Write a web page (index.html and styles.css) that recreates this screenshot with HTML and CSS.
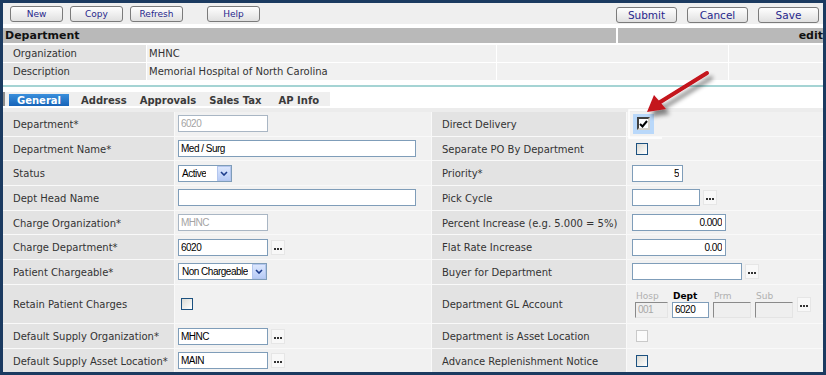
FILE: index.html
```html
<!DOCTYPE html>
<html>
<head>
  <title>Department</title>
  <meta charset="utf-8">
  <link rel="stylesheet" href="styles.css">
</head>
<body>
  <div class="window">
    <div class="toolbar">
      <div class="tools">
        <button class="btn">New</button>
        <button class="btn">Copy</button>
        <button class="btn">Refresh</button>
        <button class="btn help">Help</button>
      </div>
      <div class="actions">
        <button class="btn">Submit</button>
        <button class="btn">Cancel</button>
        <button class="btn">Save</button>
      </div>
    </div>

    <div class="title-bar">
      <div class="title">Department</div>
      <div class="mode">edit</div>
    </div>

    <div class="info">
      <div class="label">Organization</div><div class="value">MHNC</div><div></div><div></div>
      <div class="label">Description</div><div class="value">Memorial Hospital of North Carolina</div><div></div><div></div>
    </div>

    <div class="tab-bar">
      <div class="tabs">
        <span class="tab active">General</span>
        <span class="tab t-address">Address</span>
        <span class="tab t-approvals">Approvals</span>
        <span class="tab t-tax">Sales Tax</span>
        <span class="tab t-ap">AP Info</span>
      </div>
    </div>

    <div class="form">
      <div class="grid">
        <div class="lbl">Department*</div>
        <div class="val"><input class="field off w90" value="6020" disabled></div>
        <div class="lbl">Direct Delivery</div>
        <div class="val r"><span class="hilite"><span class="tick"><svg width="9" height="8" viewBox="0 0 9 8"><path d="M1 4 L3.5 6.5 L8 1" fill="none" stroke="#000" stroke-width="2"/></svg></span></span></div>

        <div class="lbl">Department Name*</div>
        <div class="val"><input class="field w238" value="Med / Surg"></div>
        <div class="lbl">Separate PO By Department</div>
        <div class="val r"><span class="box"></span></div>

        <div class="lbl">Status</div>
        <div class="val"><span class="select w54"><span class="sel-text">Active</span><span class="sel-btn"><svg width="8" height="5" viewBox="0 0 8 5"><path d="M1 1 L4 4 L7 1" fill="none" stroke="#1d3d8c" stroke-width="1.6"/></svg></span></span></div>
        <div class="lbl">Priority*</div>
        <div class="val r"><input class="field num w51" value="5"></div>

        <div class="lbl">Dept Head Name</div>
        <div class="val"><input class="field w238" value=""></div>
        <div class="lbl">Pick Cycle</div>
        <div class="val r"><input class="field w68" value=""><span class="dots"><svg width="8" height="2" viewBox="0 0 8 2"><rect x="0" width="2" height="2"/><rect x="3" width="2" height="2"/><rect x="6" width="2" height="2"/></svg></span></div>

        <div class="lbl">Charge Organization*</div>
        <div class="val"><input class="field off w90" value="MHNC" disabled></div>
        <div class="lbl">Percent Increase (e.g. 5.000 = 5%)</div>
        <div class="val r"><input class="field num w94" value="0.000"></div>

        <div class="lbl">Charge Department*</div>
        <div class="val"><input class="field w90" value="6020"><span class="dots"><svg width="8" height="2" viewBox="0 0 8 2"><rect x="0" width="2" height="2"/><rect x="3" width="2" height="2"/><rect x="6" width="2" height="2"/></svg></span></div>
        <div class="lbl">Flat Rate Increase</div>
        <div class="val r"><input class="field num w94" value="0.00"></div>

        <div class="lbl">Patient Chargeable*</div>
        <div class="val"><span class="select w89"><span class="sel-text">Non Chargeable</span><span class="sel-btn"><svg width="8" height="5" viewBox="0 0 8 5"><path d="M1 1 L4 4 L7 1" fill="none" stroke="#1d3d8c" stroke-width="1.6"/></svg></span></span></div>
        <div class="lbl">Buyer for Department</div>
        <div class="val r"><input class="field w110" value=""><span class="dots"><svg width="8" height="2" viewBox="0 0 8 2"><rect x="0" width="2" height="2"/><rect x="3" width="2" height="2"/><rect x="6" width="2" height="2"/></svg></span></div>

        <div class="lbl">Retain Patient Charges</div>
        <div class="val"><span class="box left"></span></div>
        <div class="lbl">Department GL Account</div>
        <div class="val r">
          <div class="gl">
            <span class="sub">Hosp</span>
            <span class="sub on">Dept</span>
            <span class="sub">Prm</span>
            <span class="sub">Sub</span>
            <span class="dots gl-dots"><svg width="8" height="2" viewBox="0 0 8 2"><rect x="0" width="2" height="2"/><rect x="3" width="2" height="2"/><rect x="6" width="2" height="2"/></svg></span>
            <input class="gl-in" value="001" disabled>
            <input class="gl-in on" value="6020">
            <input class="gl-in" value="" disabled>
            <input class="gl-in" value="" disabled>
          </div>
        </div>

        <div class="lbl">Default Supply Organization*</div>
        <div class="val"><input class="field w90" value="MHNC"><span class="dots"><svg width="8" height="2" viewBox="0 0 8 2"><rect x="0" width="2" height="2"/><rect x="3" width="2" height="2"/><rect x="6" width="2" height="2"/></svg></span></div>
        <div class="lbl">Department is Asset Location</div>
        <div class="val r"><span class="box off"></span></div>

        <div class="lbl">Default Supply Asset Location*</div>
        <div class="val"><input class="field w90" value="MAIN"><span class="dots"><svg width="8" height="2" viewBox="0 0 8 2"><rect x="0" width="2" height="2"/><rect x="3" width="2" height="2"/><rect x="6" width="2" height="2"/></svg></span></div>
        <div class="lbl">Advance Replenishment Notice</div>
        <div class="val r"><span class="box"></span></div>
      </div>
    </div>
  </div>

  <!-- annotation drawn over the screenshot -->
  <svg class="annotation" width="826" height="375" viewBox="0 0 826 375">
    <defs>
      <filter id="shadow" x="-20%" y="-20%" width="160%" height="160%">
        <feDropShadow dx="4" dy="5" stdDeviation="2" flood-color="#000" flood-opacity="0.45"/>
      </filter>
    </defs>
    <path d="M662 110 H629 V138 H662" fill="none" stroke="#fff" stroke-width="1.5"/>
    <g filter="url(#shadow)">
      <line x1="707" y1="73" x2="657" y2="104" stroke="#c4121b" stroke-width="4" stroke-linecap="round"/>
      <polygon points="647,112 654,95 666,109" fill="#c4121b"/>
    </g>
  </svg>
</body>
</html>
```

FILE: styles.css
```css
* { box-sizing: border-box; }
body { margin: 0; padding: 3px; background: #1b3a60; font-family: "DejaVu Sans", Verdana, sans-serif; font-size: 10px; color: #333; position: relative; }
.window { background: #fff; height: 369px; overflow: hidden; }

/* toolbar */
.toolbar { display: flex; justify-content: space-between; height: 21px; background: #efefef; }
.tools { display: flex; gap: 7px; padding: 3px 0 0 7px; }
.tools .help { margin-left: 17px; }
.actions { display: flex; gap: 10px; padding: 4px 4px 0 0; }
.btn {
  width: 53px;
  height: 16px;
  padding: 1px 0 0;
  border: 1px solid #7b7b7b;
  border-radius: 3px;
  background: linear-gradient(#fefefe, #e0e0e0);
  color: #27278c;
  font-family: "DejaVu Sans", Verdana, sans-serif;
  font-size: 9px;
  line-height: 13px;
}
.actions .btn { width: 61px; font-size: 10.5px; }

/* title */
.title-bar { display: flex; gap: 2px; margin-top: 4px; height: 15px; }
.title, .mode { background: #b9b9b9; font-weight: bold; font-size: 11px; color: #111; line-height: 16px; }
.title { flex: 1; padding-left: 2px; }
.mode { width: 205px; text-align: right; }

.info { display: grid; grid-template-columns: 143px 349px 231px 1fr; grid-auto-rows: 17px; gap: 1px; margin-top: 2px; background: #fff; }
.info div { background: #f1f1f1; line-height: 18px; }
.info .label { background: #e3e3e3; padding-left: 10px; }
.info .value { padding-left: 2px; }

/* tabs */
.tab-bar { margin-top: 5px; border-top: 2px solid #a5d4d4; padding-top: 5px; }
.tabs { display: flex; align-items: flex-end; width: 327px; height: 14px; background: #efefef; border-left: 2px solid #8c8c8c; padding-left: 4px; }
.tab { font-weight: bold; font-size: 10px; color: #3a3a3a; height: 12px; line-height: 13px; }
.tab.active { width: 60px; text-align: center; color: #fff; background: linear-gradient(#3a8fdc, #1763b8); }
.t-address { margin-left: 12px; }
.t-approvals { margin-left: 13px; }
.t-tax { margin-left: 13px; }
.t-ap { margin-left: 17px; }

/* form */
.form { margin-top: 2px; padding-top: 4px; background: #ececec; }
.grid {
  display: grid;
  grid-template-columns: 171px 256px 194px 196px;
  grid-template-rows: repeat(7, 23.7px) 38.5px 23.7px 23.7px;
  gap: 1px;
  background: #f9f9f9;
}
.lbl { background: #e3e3e3; padding-left: 10px; padding-top: 1px; display: flex; align-items: center; white-space: nowrap; }
.val { background: #f1f1f1; padding-left: 3px; display: flex; align-items: center; }
.val.r { padding-left: 5px; }

.field {
  height: 17px;
  border: 1px solid #7f9db9;
  background: #fff;
  padding: 0 2px;
  margin: 0;
  font-family: "Liberation Sans", Arial, sans-serif;
  font-size: 10px;
  letter-spacing: -0.5px;
  color: #000;
  outline: none;
}
.field.off { border-color: #a9b6c4; color: #a4a4a4; background: #fff; }
.num { text-align: right; padding-right: 3px; }
.w90 { width: 90px; }
.w238 { width: 238px; }
.w51 { width: 51px; }
.w68 { width: 68px; }
.w94 { width: 94px; }
.w110 { width: 110px; }

.select { display: inline-flex; align-items: center; height: 17px; border: 1px solid #7f9db9; background: #fff; font-family: "Liberation Sans", Arial, sans-serif; font-size: 10px; letter-spacing: -0.5px; color: #000; }
.select.w54 { width: 54px; }
.select.w89 { width: 89px; }
.sel-text { padding-left: 3px; white-space: nowrap; overflow: hidden; }
.sel-btn { margin-left: auto; flex: none; width: 14px; height: 15px; background: linear-gradient(#dce7fd, #b7cbf6); border: 1px solid #b3c6ee; display: flex; align-items: center; justify-content: center; }

.dots { width: 14px; height: 15px; margin-left: 3px; background: #f8f8f8; border: 1px solid #e6e6e6; display: flex; align-items: flex-end; justify-content: center; padding-bottom: 4px; }
.dots svg { fill: #333; }

.box { width: 12px; height: 12px; margin-left: 4px; border: 1px solid #1c5180; background: linear-gradient(135deg, #dadad4, #fff); }
.box.left { margin-left: 3px; }
.box.off { border-color: #c9c9c9; background: #fbfbfb; }

.hilite { width: 21px; height: 20px; margin-left: 1px; background: #b9d8fa; display: flex; align-items: center; justify-content: center; }
.tick { width: 13px; height: 13px; background: #fff; border: 2px solid; border-color: #404040 #d4d0c8 #d4d0c8 #404040; display: flex; align-items: center; justify-content: center; }

/* GL account */
.gl { display: grid; grid-template-columns: 33px 37px 38px 38px 14px; grid-template-rows: 11px 16px; column-gap: 4px; margin-left: 3px; }
.sub { font-size: 9px; color: #b0b0b0; line-height: 10px; padding-left: 1px; }
.sub.on { color: #000; font-weight: bold; }
.gl-dots { grid-row: 1 / 3; grid-column: 5; align-self: center; margin-left: 0; }
.gl-in {
  width: 100%;
  height: 16px;
  margin: 0;
  padding: 0 2px;
  border: 1px solid;
  border-color: #8a8a8a #e4e4e4 #e4e4e4 #8a8a8a;
  background: #efefef;
  font-family: "Liberation Sans", Arial, sans-serif;
  font-size: 10px;
  letter-spacing: -0.5px;
  color: #a8a8a8;
}
.gl-in.on { border-color: #7f9db9; background: #fff; color: #000; }

.annotation { position: absolute; left: 0; top: 0; pointer-events: none; }
```
